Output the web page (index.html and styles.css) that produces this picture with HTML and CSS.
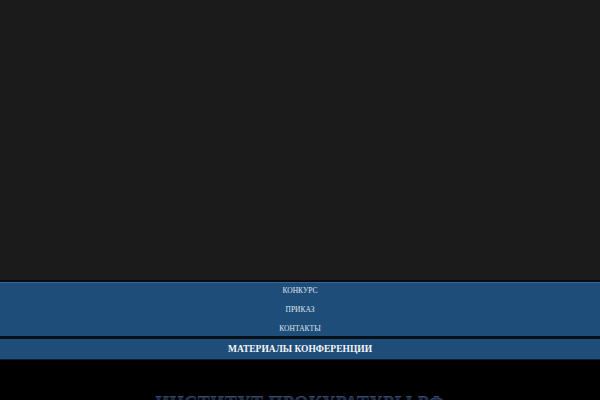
FILE: index.html
```html
<!DOCTYPE html>
<html lang="ru">
<head>
<meta charset="utf-8">
<title>Конференция</title>
<link rel="stylesheet" href="styles.css">
</head>
<body>
<div class="hero"></div>
<nav class="nav">
  <ul class="menu">
    <li><a href="#">КОНКУРС</a></li>
    <li><a href="#">ПРИКАЗ</a></li>
    <li><a href="#">КОНТАКТЫ</a></li>
  </ul>
</nav>
<div class="sep"></div>
<div class="materials"><a href="#">МАТЕРИАЛЫ КОНФЕРЕНЦИИ</a></div>
<main class="main">
  <h1 class="title">ИНСТИТУТ ПРОКУРАТУРЫ РФ</h1>
</main>
</body>
</html>
```
FILE: styles.css
```css
html, body {
  margin: 0;
  padding: 0;
  background: #000;
  font-family: "Liberation Serif", "Times New Roman", serif;
}
.hero {
  height: 280px;
  background: #1b1b1b;
}
.nav {
  border-top: 2px solid #060b14;
  background: #1f4d79;
  height: 54px;
  box-shadow: inset 0 1px 0 #3a6794;
}
.menu {
  list-style: none;
  margin: 0;
  padding: 0;
  position: relative;
  top: -1px;
  text-align: center;
}
.menu li {
  line-height: 19px;
  font-size: 7.5px;
}
.menu a {
  color: #dfe6ee;
  text-decoration: none;
}
.sep {
  height: 3px;
  background: #08101c;
}
.materials {
  background: #1f4d79;
  height: 20px;
  line-height: 20px;
  text-align: center;
  font-size: 9.5px;
  font-weight: bold;
  border-bottom: 1px solid #0d2038;
}
.materials a {
  color: #f4f6f9;
  text-decoration: none;
}
.main {
  background: #000;
  height: 200px;
  overflow: hidden;
}
.title {
  margin: 32px 0 0;
  text-align: center;
  font-size: 18px;
  line-height: 24px;
  font-weight: bold;
  color: #1c2a48;
  text-shadow: 0 -1px 0 #3c4a66;
  letter-spacing: 0.5px;
}
```
